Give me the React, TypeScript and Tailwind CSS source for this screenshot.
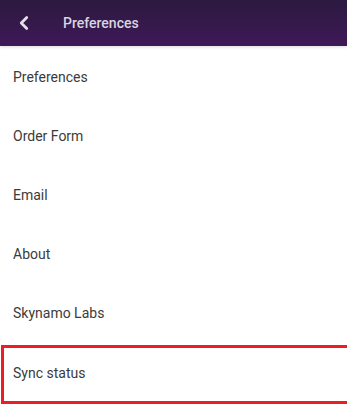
import { ChevronLeft } from 'lucide-react';

const items = ['Preferences', 'Order Form', 'Email', 'About', 'Skynamo Labs'];

export default function App() {
  return (
    <div className="w-[347px] h-[412px] overflow-hidden bg-white font-['Roboto',sans-serif]">
      <header className="h-[46px] flex items-center bg-gradient-to-b from-[#2c1940] to-[#3e1858] shadow-[0_1px_3px_rgba(0,0,0,0.15)]">
        <ChevronLeft className="ml-[13px] w-[22px] h-[22px] text-[#e4e0ea]" strokeWidth={3} />
        <span className="ml-[28px] text-[14px] font-medium text-[#d9d4e0]">Preferences</span>
      </header>
      <div className="flex flex-col pt-[2px]">
        {items.map((label) => (
          <div key={label} className="h-[59px] flex items-center px-[13px] text-[14px] text-[#3b3b3b]">
            {label}
          </div>
        ))}
        <div className="mt-[2px] h-[59px] -mr-[4px] ml-[1px] border-[3px] border-[#ee1c25] flex items-center pb-[3px] px-[9px] text-[14px] text-[#3b3b3b]">
          Sync status
        </div>
      </div>
    </div>
  );
}
